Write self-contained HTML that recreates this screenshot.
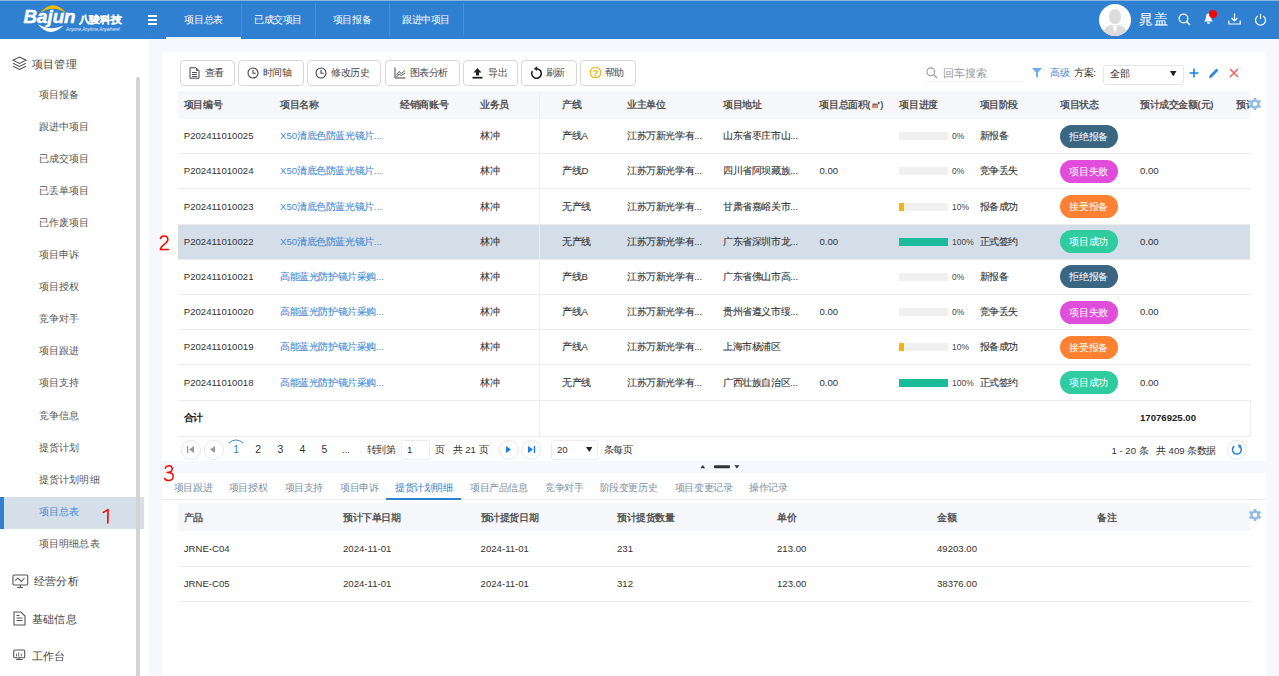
<!DOCTYPE html><html><head><meta charset="utf-8"><title>Bajun</title><style>
*{margin:0;padding:0;box-sizing:border-box}
html,body{width:1279px;height:676px;overflow:hidden;background:#f6f8fd;font-family:"Liberation Sans",sans-serif;color:#333}
.a{position:absolute}
i{display:inline-block;width:1em;font-style:normal;text-align:center}
.td i{-webkit-text-stroke:0.1px currentColor}
.hd{left:0;top:0;width:1279px;height:39px;background:#2f80d1}
.hd .tab{top:0;height:39px;width:74px;color:#fff;font-size:9.6px;line-height:39px;text-align:center}
.hd .sep{top:3px;width:1px;height:33px;background:rgba(255,255,255,.13)}
.sb{left:0;top:39px;width:149px;height:637px;background:#fff}
.mi{left:38.5px;font-size:10.2px;color:#555;line-height:14px;white-space:nowrap}
.mh{left:32px;font-size:11.2px;color:#444;line-height:16px;white-space:nowrap}
.card{background:#fff;border-radius:4px}
.btn{top:60px;height:25.5px;border:1px solid #d6d6d6;border-radius:4px;background:#fff;font-size:9.6px;color:#444;line-height:23.5px;white-space:nowrap}
.th{font-weight:bold;color:#555;font-size:9.6px;line-height:14px;white-space:nowrap}
.td{color:#333;font-size:9.6px;line-height:14px;white-space:nowrap}
.lk{color:#3f8bd6}
.badge{width:58px;height:23px;border-radius:12px;color:#fff;font-size:9.6px;line-height:23px;text-align:center}
.pb{width:48.5px;height:8px;background:#f0f0f0}
.pt{font-size:8.5px;color:#444;line-height:12px}
.hl{height:1px;background:#ececec}
.pg{font-size:9.6px;color:#333;line-height:14px;white-space:nowrap}
.circ{width:20px;height:20px;border-radius:50%;border:1px solid #e8e8e8;background:#fff}
.t2{font-size:9.6px;color:#7d8fa3;line-height:14px;white-space:nowrap}
</style></head><body>
<div class="a hd">
<div class="a" style="left:0;top:0;width:1279px;height:1px;background:#8db4dc"></div>
<svg class="a" style="left:22px;top:4px" width="104" height="30" viewBox="0 0 104 30"><path d="M18 9.2 Q31 -6.6 44.5 9.4 Q31 0.2 18 9.2Z" fill="#f5b800"/><text x="1.5" y="19" font-family="Liberation Sans" font-weight="bold" font-style="italic" font-size="18.5" fill="#fff" stroke="#fff" stroke-width="0.5" textLength="52" lengthAdjust="spacingAndGlyphs">Bajun</text><path d="M15.5 20 Q28 35 41.5 21.5 Q28 27.5 15.5 20Z" fill="#fff"/><text x="56.5" y="18.9" font-family="Liberation Sans" font-weight="bold" font-size="10.2" fill="#fff" stroke="#fff" stroke-width="0.25" textLength="43.5" lengthAdjust="spacingAndGlyphs">八骏科技</text><text x="44" y="27" font-family="Liberation Sans" font-style="italic" font-size="4.6" fill="#e8f0ff" textLength="54" lengthAdjust="spacingAndGlyphs">Anyone,Anytime,Anywhere!</text></svg>
<div class="a" style="left:148px;top:15px;width:9px;height:1.5px;background:#fff"></div>
<div class="a" style="left:148px;top:19px;width:9px;height:1.5px;background:#fff"></div>
<div class="a" style="left:148px;top:23px;width:9px;height:1.5px;background:#fff"></div>
<div class="a tab" style="left:166px;width:75px"><i>项</i><i>目</i><i>总</i><i>表</i></div>
<div class="a tab" style="left:241px;width:74px"><i>已</i><i>成</i><i>交</i><i>项</i><i>目</i></div>
<div class="a tab" style="left:315px;width:74px"><i>项</i><i>目</i><i>报</i><i>备</i></div>
<div class="a tab" style="left:389px;width:74px"><i>跟</i><i>进</i><i>中</i><i>项</i><i>目</i></div>
<div class="a sep" style="left:241px"></div>
<div class="a sep" style="left:315px"></div>
<div class="a sep" style="left:389px"></div>
<div class="a sep" style="left:463px"></div>
<div class="a" style="left:166px;top:37px;width:75px;height:2px;background:#eaf2fb"></div>
<div class="a" style="left:1099px;top:3.5px;width:32px;height:32px;border-radius:50%;background:#fff;overflow:hidden"><div class="a" style="left:10px;top:5.4px;width:12px;height:15.5px;border-radius:50% 50% 45% 45%;background:#dcdcdc"></div><div class="a" style="left:4px;top:21.3px;width:24px;height:14px;border-radius:9px 9px 0 0;background:#dcdcdc"></div><svg class="a" style="left:13px;top:21px" width="6" height="8" viewBox="0 0 6 8"><path d="M0.5 0.5 H5.5 L3 7.5Z" fill="#fff"/></svg></div>
<div class="a" style="left:1139px;top:11px;font-size:14.4px;line-height:17px;color:#fff;white-space:nowrap"><i>晁</i><i>盖</i></div>
<svg class="a" style="left:1178px;top:13px" width="14" height="13" viewBox="0 0 14 13"><circle cx="5.5" cy="5.5" r="4.3" fill="none" stroke="#fff" stroke-width="1.3"/><path d="M8.6 8.6 L12 12" stroke="#fff" stroke-width="1.4"/></svg>
<svg class="a" style="left:1203px;top:12px" width="14" height="13" viewBox="0 0 14 13"><path d="M1 9.5 Q3 8 3 5 Q3 1.5 5.5 1.5 Q8 1.5 8 5 Q8 8 10 9.5Z" fill="#fff"/><rect x="4" y="10.3" width="3" height="1.5" rx=".7" fill="#fff"/></svg>
<div class="a" style="left:1209px;top:10px;width:8px;height:8px;border-radius:50%;background:#f00"></div>
<svg class="a" style="left:1228px;top:13px" width="13" height="12" viewBox="0 0 13 12"><path d="M6.5 0.5 V8 M3.5 5 L6.5 8 L9.5 5" fill="none" stroke="#fff" stroke-width="1.2"/><path d="M0.8 7.5 V11 H12.2 V7.5" fill="none" stroke="#fff" stroke-width="1.2"/></svg>
<svg class="a" style="left:1254px;top:13px" width="13" height="13" viewBox="0 0 13 13"><path d="M3.8 3 A5 5 0 1 0 9.2 3" fill="none" stroke="#fff" stroke-width="1.2"/><path d="M6.5 0.8 V6" stroke="#fff" stroke-width="1.2"/></svg>
</div>
<div class="a sb"></div>
<svg class="a" style="left:12px;top:56px" width="15" height="15" viewBox="0 0 15 15"><path d="M7.5 1 L14 4.2 L7.5 7.4 L1 4.2Z" fill="none" stroke="#555" stroke-width="1.1"/><path d="M1 7.2 L7.5 10.4 L14 7.2" fill="none" stroke="#555" stroke-width="1.1"/><path d="M1 10.2 L7.5 13.4 L14 10.2" fill="none" stroke="#555" stroke-width="1.1"/></svg>
<div class="a mh" style="top:56px"><i>项</i><i>目</i><i>管</i><i>理</i></div>
<div class="a mi" style="top:87.5px"><i>项</i><i>目</i><i>报</i><i>备</i></div>
<div class="a mi" style="top:119.6px"><i>跟</i><i>进</i><i>中</i><i>项</i><i>目</i></div>
<div class="a mi" style="top:151.7px"><i>已</i><i>成</i><i>交</i><i>项</i><i>目</i></div>
<div class="a mi" style="top:183.8px"><i>已</i><i>丢</i><i>单</i><i>项</i><i>目</i></div>
<div class="a mi" style="top:215.9px"><i>已</i><i>作</i><i>废</i><i>项</i><i>目</i></div>
<div class="a mi" style="top:248.0px"><i>项</i><i>目</i><i>申</i><i>诉</i></div>
<div class="a mi" style="top:280.1px"><i>项</i><i>目</i><i>授</i><i>权</i></div>
<div class="a mi" style="top:312.2px"><i>竞</i><i>争</i><i>对</i><i>手</i></div>
<div class="a mi" style="top:344.3px"><i>项</i><i>目</i><i>跟</i><i>进</i></div>
<div class="a mi" style="top:376.4px"><i>项</i><i>目</i><i>支</i><i>持</i></div>
<div class="a mi" style="top:408.5px"><i>竞</i><i>争</i><i>信</i><i>息</i></div>
<div class="a mi" style="top:440.6px"><i>提</i><i>货</i><i>计</i><i>划</i></div>
<div class="a mi" style="top:472.7px"><i>提</i><i>货</i><i>计</i><i>划</i><i>明</i><i>细</i></div>
<div class="a" style="left:0;top:497px;width:144px;height:32px;background:#d5dfe9"></div>
<div class="a" style="left:0;top:497px;width:4px;height:32px;background:#2f80d1"></div>
<div class="a mi" style="top:504.8px;color:#3f8bd6"><i>项</i><i>目</i><i>总</i><i>表</i></div>
<div class="a mi" style="top:536.9px"><i>项</i><i>目</i><i>明</i><i>细</i><i>总</i><i>表</i></div>
<div class="a" style="left:136px;top:77px;width:3.5px;height:599px;background:#d4d4d4;border-radius:2px 2px 0 0"></div>
<svg class="a" style="left:12px;top:574px" width="17" height="15" viewBox="0 0 17 15"><rect x="1" y="1" width="14.7" height="10" rx="1.2" fill="none" stroke="#555" stroke-width="1.1"/><path d="M3.1 6.6 L5.8 4.2 L9.3 7.5 L12.5 4" fill="none" stroke="#555" stroke-width="1.1"/><path d="M8.3 11 V13.5 M5.2 13.5 H10.9" stroke="#555" stroke-width="1.1"/></svg>
<div class="a mh" style="top:573px;left:34px"><i>经</i><i>营</i><i>分</i><i>析</i></div>
<svg class="a" style="left:13px;top:611px" width="13" height="15" viewBox="0 0 13 15"><path d="M1 1 H8 L12 5 V14 H1Z" fill="none" stroke="#555" stroke-width="1.1"/><path d="M3.5 7 H9.5 M3.5 9.5 H9.5 M3.5 4.5 H6.5" stroke="#555" stroke-width="1"/></svg>
<div class="a mh" style="top:610.5px"><i>基</i><i>础</i><i>信</i><i>息</i></div>
<svg class="a" style="left:13px;top:649px" width="13" height="12" viewBox="0 0 13 12"><rect x="0.7" y="1" width="11" height="7.7" rx="1" fill="none" stroke="#555" stroke-width="1.1"/><path d="M3.5 7.5 V4.5 M5.7 7.5 V3.2 M8.3 7.5 V4.5" stroke="#666" stroke-width="0.9"/><path d="M6.2 8.7 V10.5 M3 10.5 H9.6" stroke="#555" stroke-width="1.1"/></svg>
<div class="a mh" style="top:647.5px"><i>工</i><i>作</i><i>台</i></div>
<svg class="a" style="left:100px;top:506px" width="12" height="20" viewBox="0 0 12 20"><path d="M3.4 6.4 L8 3.6 L7.8 17" fill="none" stroke="#f00" stroke-width="1.6" stroke-linecap="round" stroke-linejoin="round"/></svg>
<div class="a card" style="left:162px;top:52px;width:1104px;height:409px;border-radius:4px 4px 0 0"></div>
<div class="a btn" style="left:180.0px;width:55.0px"><svg class="a" style="left:7.8px;top:6px" width="11" height="12" viewBox="0 0 11 12"><path d="M1 .8 H7 L10 3.8 V11.2 H1Z" fill="none" stroke="#444" stroke-width="1"/><path d="M3 5.5 H8 M3 7.5 H8 M3 9.5 H8" stroke="#444" stroke-width=".9"/><path d="M7 .8 V3.8 H10" fill="#444"/></svg><span class="a" style="left:23.5px;top:0"><i>查</i><i>看</i></span></div>
<div class="a btn" style="left:238.0px;width:65.5px"><svg class="a" style="left:7.8px;top:6px" width="12" height="12" viewBox="0 0 12 12"><circle cx="6" cy="6" r="5" fill="none" stroke="#444" stroke-width="1.1"/><path d="M6 2.8 V6.2 H8.8" fill="none" stroke="#444" stroke-width="1.1"/></svg><span class="a" style="left:23.5px;top:0"><i>时</i><i>间</i><i>轴</i></span></div>
<div class="a btn" style="left:306.5px;width:74.5px"><svg class="a" style="left:7.8px;top:6px" width="12" height="12" viewBox="0 0 12 12"><circle cx="6" cy="6" r="5" fill="none" stroke="#444" stroke-width="1.1"/><path d="M6 2.8 V6.2 H8.8" fill="none" stroke="#444" stroke-width="1.1"/></svg><span class="a" style="left:23.5px;top:0"><i>修</i><i>改</i><i>历</i><i>史</i></span></div>
<div class="a btn" style="left:385.0px;width:74.5px"><svg class="a" style="left:7.8px;top:6px" width="12" height="12" viewBox="0 0 12 12"><path d="M1 .5 V11 H11.5" fill="none" stroke="#444" stroke-width="1"/><path d="M2.5 8 L5 4.5 L7.5 6.5 L11 3.5 M2.5 10 L5 7 L7.5 8.5 L11 6" fill="none" stroke="#444" stroke-width=".9"/></svg><span class="a" style="left:23.5px;top:0"><i>图</i><i>表</i><i>分</i><i>析</i></span></div>
<div class="a btn" style="left:462.5px;width:55.5px"><svg class="a" style="left:8.5px;top:6px" width="11" height="12" viewBox="0 0 11 12"><path d="M5.5 1 L9.5 5.5 H7 V8.5 H4 V5.5 H1.5Z" fill="#222"/><rect x="0.5" y="9.8" width="10" height="1.8" fill="#222"/></svg><span class="a" style="left:24.5px;top:0"><i>导</i><i>出</i></span></div>
<div class="a btn" style="left:521.3px;width:55.3px"><svg class="a" style="left:7.8px;top:4.8px" width="13" height="14" viewBox="0 0 13 14"><path d="M6.8 2.7 A4.8 4.8 0 1 1 2.34 5.1" fill="none" stroke="#222" stroke-width="1.6"/><path d="M3.8 2.7 L7.2 0.3 L7.2 5.1Z" fill="#222"/></svg><span class="a" style="left:23.5px;top:0"><i>刷</i><i>新</i></span></div>
<div class="a btn" style="left:580.4px;width:55.4px"><svg class="a" style="left:8px;top:4.9px" width="13" height="13" viewBox="0 0 13 13"><circle cx="6.5" cy="6.5" r="5.3" fill="none" stroke="#f5b400" stroke-width="1.1"/><text x="6.6" y="9.9" text-anchor="middle" font-family="Liberation Sans" font-weight="bold" font-size="9.5" fill="#f5b400">?</text></svg><span class="a" style="left:23.5px;top:0"><i>帮</i><i>助</i></span></div>
<svg class="a" style="left:926px;top:67px" width="12" height="12" viewBox="0 0 12 12"><circle cx="4.8" cy="4.8" r="3.9" fill="none" stroke="#999" stroke-width="1.1"/><path d="M7.6 7.6 L11 11" stroke="#999" stroke-width="1.3"/></svg>
<div class="a" style="left:943px;top:65.8px;font-size:10.9px;color:#999;line-height:14px"><i>回</i><i>车</i><i>搜</i><i>索</i></div>
<div class="a" style="left:926px;top:81px;width:99px;height:1px;background:#efefef"></div>
<svg class="a" style="left:1032px;top:68px" width="10" height="10" viewBox="0 0 10 10"><path d="M0 0 H10 L6 4.5 V10 L4 8.5 V4.5Z" fill="#6fabe6"/></svg>
<div class="a" style="left:1050px;top:66px;font-size:9.6px;color:#3f8bd6;line-height:14px"><i>高</i><i>级</i></div>
<div class="a" style="left:1074px;top:66px;font-size:9.6px;color:#333;line-height:14px"><i>方</i><i>案</i>:</div>
<div class="a" style="left:1103px;top:64.5px;width:80.5px;height:20px;border:1px solid #e6e6e6;border-radius:3px;background:#fff"></div>
<div class="a" style="left:1110px;top:67px;font-size:9.6px;color:#333;line-height:14px"><i>全</i><i>部</i></div>
<svg class="a" style="left:1170px;top:70.8px" width="6.5" height="5.5" viewBox="0 0 6.5 5.5"><path d="M0 0 H6.5 L3.25 5.5Z" fill="#222"/></svg>
<svg class="a" style="left:1189px;top:68px" width="10" height="10" viewBox="0 0 10 10"><path d="M5 .5 V9.5 M.5 5 H9.5" stroke="#1e7fe0" stroke-width="1.6"/></svg>
<svg class="a" style="left:1208px;top:67px" width="12" height="12" viewBox="0 0 12 12"><path d="M1 11 L1.6 8.4 L8.5 1.5 L10.5 3.5 L3.6 10.4Z" fill="#3386d9"/></svg>
<svg class="a" style="left:1229px;top:68px" width="10" height="10" viewBox="0 0 10 10"><path d="M1 1 L9 9 M9 1 L1 9" stroke="#f46262" stroke-width="1.6"/></svg>
<div class="a" style="left:178px;top:91px;width:1072px;height:27.5px;background:#f5f7fb"></div>
<div class="a th" style="left:183.8px;top:98px"><i>项</i><i>目</i><i>编</i><i>号</i></div>
<div class="a th" style="left:280.0px;top:98px"><i>项</i><i>目</i><i>名</i><i>称</i></div>
<div class="a th" style="left:400.3px;top:98px"><i>经</i><i>销</i><i>商</i><i>账</i><i>号</i></div>
<div class="a th" style="left:480.0px;top:98px"><i>业</i><i>务</i><i>员</i></div>
<div class="a th" style="left:562.3px;top:98px"><i>产</i><i>线</i></div>
<div class="a th" style="left:627.0px;top:98px"><i>业</i><i>主</i><i>单</i><i>位</i></div>
<div class="a th" style="left:723.0px;top:98px"><i>项</i><i>目</i><i>地</i><i>址</i></div>
<div class="a th" style="left:819.4px;top:98px"><i>项</i><i>目</i><i>总</i><i>面</i><i>积</i>(<i>㎡</i>)</div>
<div class="a th" style="left:899.4px;top:98px"><i>项</i><i>目</i><i>进</i><i>度</i></div>
<div class="a th" style="left:979.6px;top:98px"><i>项</i><i>目</i><i>阶</i><i>段</i></div>
<div class="a th" style="left:1060.0px;top:98px"><i>项</i><i>目</i><i>状</i><i>态</i></div>
<div class="a th" style="left:1140.0px;top:98px"><i>预</i><i>计</i><i>成</i><i>交</i><i>金</i><i>额</i>(<i>元</i>)</div>
<div class="a th" style="left:1236.0px;top:98px;width:14px;overflow:hidden"><i>预</i><i>计</i><i>成</i><i>交</i></div>
<svg class="a" style="left:1248.6px;top:98.1px" width="12" height="12" viewBox="0 0 12 12"><circle cx="6" cy="6" r="4.6" fill="#8fbbe6"/><rect x="4.7" y="-0.3" width="2.6" height="12.6" rx="0.4" fill="#8fbbe6" transform="rotate(0 6 6)"/><rect x="4.7" y="-0.3" width="2.6" height="12.6" rx="0.4" fill="#8fbbe6" transform="rotate(60 6 6)"/><rect x="4.7" y="-0.3" width="2.6" height="12.6" rx="0.4" fill="#8fbbe6" transform="rotate(120 6 6)"/><circle cx="6" cy="6" r="2.3" fill="#fff"/></svg>
<div class="a hl" style="left:178px;top:153.2px;width:1072px"></div>
<div class="a td" style="left:183.75px;top:129.1px">P202411010025</div>
<div class="a td lk" style="left:280px;top:129.1px">X50<i>清</i><i>底</i><i>色</i><i>防</i><i>蓝</i><i>光</i><i>镜</i><i>片</i>...</div>
<div class="a td" style="left:480px;top:129.1px"><i>林</i><i>冲</i></div>
<div class="a td" style="left:562.3px;top:129.1px"><i>产</i><i>线</i>A</div>
<div class="a td" style="left:627px;top:129.1px"><i>江</i><i>苏</i><i>万</i><i>新</i><i>光</i><i>学</i><i>有</i>...</div>
<div class="a td" style="left:723px;top:129.1px"><i>山</i><i>东</i><i>省</i><i>枣</i><i>庄</i><i>市</i><i>山</i>...</div>
<div class="a pb" style="left:899px;top:132.1px"></div>
<div class="a pt" style="left:952px;top:130.1px">0%</div>
<div class="a td" style="left:979.6px;top:129.1px"><i>新</i><i>报</i><i>备</i></div>
<div class="a badge" style="left:1059.6px;top:124.6px;background:#3a6682"><i>拒</i><i>绝</i><i>报</i><i>备</i></div>
<div class="a hl" style="left:178px;top:188.4px;width:1072px"></div>
<div class="a td" style="left:183.75px;top:164.3px">P202411010024</div>
<div class="a td lk" style="left:280px;top:164.3px">X50<i>清</i><i>底</i><i>色</i><i>防</i><i>蓝</i><i>光</i><i>镜</i><i>片</i>...</div>
<div class="a td" style="left:480px;top:164.3px"><i>林</i><i>冲</i></div>
<div class="a td" style="left:562.3px;top:164.3px"><i>产</i><i>线</i>D</div>
<div class="a td" style="left:627px;top:164.3px"><i>江</i><i>苏</i><i>万</i><i>新</i><i>光</i><i>学</i><i>有</i>...</div>
<div class="a td" style="left:723px;top:164.3px"><i>四</i><i>川</i><i>省</i><i>阿</i><i>坝</i><i>藏</i><i>族</i>...</div>
<div class="a td" style="left:819.4px;top:164.3px">0.00</div>
<div class="a pb" style="left:899px;top:167.3px"></div>
<div class="a pt" style="left:952px;top:165.3px">0%</div>
<div class="a td" style="left:979.6px;top:164.3px"><i>竞</i><i>争</i><i>丢</i><i>失</i></div>
<div class="a badge" style="left:1059.6px;top:159.8px;background:#e14ddb"><i>项</i><i>目</i><i>失</i><i>败</i></div>
<div class="a td" style="left:1140px;top:164.3px">0.00</div>
<div class="a hl" style="left:178px;top:223.6px;width:1072px"></div>
<div class="a td" style="left:183.75px;top:199.5px">P202411010023</div>
<div class="a td lk" style="left:280px;top:199.5px">X50<i>清</i><i>底</i><i>色</i><i>防</i><i>蓝</i><i>光</i><i>镜</i><i>片</i>...</div>
<div class="a td" style="left:480px;top:199.5px"><i>林</i><i>冲</i></div>
<div class="a td" style="left:562.3px;top:199.5px"><i>无</i><i>产</i><i>线</i></div>
<div class="a td" style="left:627px;top:199.5px"><i>江</i><i>苏</i><i>万</i><i>新</i><i>光</i><i>学</i><i>有</i>...</div>
<div class="a td" style="left:723px;top:199.5px"><i>甘</i><i>肃</i><i>省</i><i>嘉</i><i>峪</i><i>关</i><i>市</i>...</div>
<div class="a pb" style="left:899px;top:202.5px"></div>
<div class="a" style="left:899px;top:202.5px;width:5px;height:8px;background:#f2b40c"></div>
<div class="a pt" style="left:952px;top:200.5px">10%</div>
<div class="a td" style="left:979.6px;top:199.5px"><i>报</i><i>备</i><i>成</i><i>功</i></div>
<div class="a badge" style="left:1059.6px;top:195.0px;background:#fd8131"><i>接</i><i>受</i><i>报</i><i>备</i></div>
<div class="a" style="left:178px;top:224.6px;width:1072px;height:34.7px;background:#d4dee8"></div>
<div class="a hl" style="left:178px;top:258.8px;width:1072px"></div>
<div class="a td" style="left:183.75px;top:234.7px">P202411010022</div>
<div class="a td lk" style="left:280px;top:234.7px">X50<i>清</i><i>底</i><i>色</i><i>防</i><i>蓝</i><i>光</i><i>镜</i><i>片</i>...</div>
<div class="a td" style="left:480px;top:234.7px"><i>林</i><i>冲</i></div>
<div class="a td" style="left:562.3px;top:234.7px"><i>无</i><i>产</i><i>线</i></div>
<div class="a td" style="left:627px;top:234.7px"><i>江</i><i>苏</i><i>万</i><i>新</i><i>光</i><i>学</i><i>有</i>...</div>
<div class="a td" style="left:723px;top:234.7px"><i>广</i><i>东</i><i>省</i><i>深</i><i>圳</i><i>市</i><i>龙</i>...</div>
<div class="a td" style="left:819.4px;top:234.7px">0.00</div>
<div class="a pb" style="left:899px;top:237.7px"></div>
<div class="a" style="left:899px;top:237.7px;width:48.5px;height:8px;background:#1abc9c"></div>
<div class="a pt" style="left:952px;top:235.7px">100%</div>
<div class="a td" style="left:979.6px;top:234.7px"><i>正</i><i>式</i><i>签</i><i>约</i></div>
<div class="a badge" style="left:1059.6px;top:230.2px;background:#2ecc9f"><i>项</i><i>目</i><i>成</i><i>功</i></div>
<div class="a td" style="left:1140px;top:234.7px">0.00</div>
<div class="a hl" style="left:178px;top:294.0px;width:1072px"></div>
<div class="a td" style="left:183.75px;top:269.9px">P202411010021</div>
<div class="a td lk" style="left:280px;top:269.9px"><i>高</i><i>能</i><i>蓝</i><i>光</i><i>防</i><i>护</i><i>镜</i><i>片</i><i>采</i><i>购</i>...</div>
<div class="a td" style="left:480px;top:269.9px"><i>林</i><i>冲</i></div>
<div class="a td" style="left:562.3px;top:269.9px"><i>产</i><i>线</i>B</div>
<div class="a td" style="left:627px;top:269.9px"><i>江</i><i>苏</i><i>万</i><i>新</i><i>光</i><i>学</i><i>有</i>...</div>
<div class="a td" style="left:723px;top:269.9px"><i>广</i><i>东</i><i>省</i><i>佛</i><i>山</i><i>市</i><i>高</i>...</div>
<div class="a pb" style="left:899px;top:272.9px"></div>
<div class="a pt" style="left:952px;top:270.9px">0%</div>
<div class="a td" style="left:979.6px;top:269.9px"><i>新</i><i>报</i><i>备</i></div>
<div class="a badge" style="left:1059.6px;top:265.4px;background:#3a6682"><i>拒</i><i>绝</i><i>报</i><i>备</i></div>
<div class="a hl" style="left:178px;top:329.2px;width:1072px"></div>
<div class="a td" style="left:183.75px;top:305.1px">P202411010020</div>
<div class="a td lk" style="left:280px;top:305.1px"><i>高</i><i>能</i><i>蓝</i><i>光</i><i>防</i><i>护</i><i>镜</i><i>片</i><i>采</i><i>购</i>...</div>
<div class="a td" style="left:480px;top:305.1px"><i>林</i><i>冲</i></div>
<div class="a td" style="left:562.3px;top:305.1px"><i>产</i><i>线</i>A</div>
<div class="a td" style="left:627px;top:305.1px"><i>江</i><i>苏</i><i>万</i><i>新</i><i>光</i><i>学</i><i>有</i>...</div>
<div class="a td" style="left:723px;top:305.1px"><i>贵</i><i>州</i><i>省</i><i>遵</i><i>义</i><i>市</i><i>绥</i>...</div>
<div class="a td" style="left:819.4px;top:305.1px">0.00</div>
<div class="a pb" style="left:899px;top:308.1px"></div>
<div class="a pt" style="left:952px;top:306.1px">0%</div>
<div class="a td" style="left:979.6px;top:305.1px"><i>竞</i><i>争</i><i>丢</i><i>失</i></div>
<div class="a badge" style="left:1059.6px;top:300.6px;background:#e14ddb"><i>项</i><i>目</i><i>失</i><i>败</i></div>
<div class="a td" style="left:1140px;top:305.1px">0.00</div>
<div class="a hl" style="left:178px;top:364.4px;width:1072px"></div>
<div class="a td" style="left:183.75px;top:340.3px">P202411010019</div>
<div class="a td lk" style="left:280px;top:340.3px"><i>高</i><i>能</i><i>蓝</i><i>光</i><i>防</i><i>护</i><i>镜</i><i>片</i><i>采</i><i>购</i>...</div>
<div class="a td" style="left:480px;top:340.3px"><i>林</i><i>冲</i></div>
<div class="a td" style="left:562.3px;top:340.3px"><i>产</i><i>线</i>A</div>
<div class="a td" style="left:627px;top:340.3px"><i>江</i><i>苏</i><i>万</i><i>新</i><i>光</i><i>学</i><i>有</i>...</div>
<div class="a td" style="left:723px;top:340.3px"><i>上</i><i>海</i><i>市</i><i>杨</i><i>浦</i><i>区</i></div>
<div class="a pb" style="left:899px;top:343.3px"></div>
<div class="a" style="left:899px;top:343.3px;width:5px;height:8px;background:#f2b40c"></div>
<div class="a pt" style="left:952px;top:341.3px">10%</div>
<div class="a td" style="left:979.6px;top:340.3px"><i>报</i><i>备</i><i>成</i><i>功</i></div>
<div class="a badge" style="left:1059.6px;top:335.8px;background:#fd8131"><i>接</i><i>受</i><i>报</i><i>备</i></div>
<div class="a hl" style="left:178px;top:399.6px;width:1072px"></div>
<div class="a td" style="left:183.75px;top:375.5px">P202411010018</div>
<div class="a td lk" style="left:280px;top:375.5px"><i>高</i><i>能</i><i>蓝</i><i>光</i><i>防</i><i>护</i><i>镜</i><i>片</i><i>采</i><i>购</i>...</div>
<div class="a td" style="left:480px;top:375.5px"><i>林</i><i>冲</i></div>
<div class="a td" style="left:562.3px;top:375.5px"><i>无</i><i>产</i><i>线</i></div>
<div class="a td" style="left:627px;top:375.5px"><i>江</i><i>苏</i><i>万</i><i>新</i><i>光</i><i>学</i><i>有</i>...</div>
<div class="a td" style="left:723px;top:375.5px"><i>广</i><i>西</i><i>壮</i><i>族</i><i>自</i><i>治</i><i>区</i>...</div>
<div class="a td" style="left:819.4px;top:375.5px">0.00</div>
<div class="a pb" style="left:899px;top:378.5px"></div>
<div class="a" style="left:899px;top:378.5px;width:48.5px;height:8px;background:#1abc9c"></div>
<div class="a pt" style="left:952px;top:376.5px">100%</div>
<div class="a td" style="left:979.6px;top:375.5px"><i>正</i><i>式</i><i>签</i><i>约</i></div>
<div class="a badge" style="left:1059.6px;top:371.0px;background:#2ecc9f"><i>项</i><i>目</i><i>成</i><i>功</i></div>
<div class="a td" style="left:1140px;top:375.5px">0.00</div>
<div class="a" style="left:539px;top:91px;width:1px;height:345px;background:#eceef1"></div>
<div class="a" style="left:1249.5px;top:400px;width:1px;height:36px;background:#eceef1"></div>
<div class="a hl" style="left:178px;top:436px;width:1072px"></div>
<div class="a th" style="left:183.75px;top:410.5px;color:#222"><i>合</i><i>计</i></div>
<div class="a th" style="left:1140px;top:410.5px;color:#222">17076925.00</div>
<svg class="a" style="left:156px;top:232.8px" width="16" height="20" viewBox="0 0 16 20"><path d="M4.4 5.6 C5 3.7 6.4 2.9 8 2.9 C10.3 2.9 11.9 4.3 11.9 6.4 C11.9 8.6 10 9.9 8 11.6 C6 13.3 4.3 14.8 4.3 16.6 L12.4 16.6" fill="none" stroke="#f00" stroke-width="1.5" stroke-linecap="round" stroke-linejoin="round"/></svg>
<div class="a circ" style="left:181.3px;top:439.7px"></div>
<svg class="a" style="left:187px;top:446px" width="8" height="7" viewBox="0 0 8 7"><path d="M0 0 H1.3 V7 H0Z M7 0 V7 L2 3.5Z" fill="#999"/></svg>
<div class="a circ" style="left:203.5px;top:439.7px"></div>
<svg class="a" style="left:210px;top:446px" width="6" height="7" viewBox="0 0 6 7"><path d="M5 0 V7 L0 3.5Z" fill="#999"/></svg>
<svg class="a" style="left:227px;top:438px" width="18" height="6" viewBox="0 0 18 6"><path d="M1.5 5 Q9 -1 16.5 5" fill="none" stroke="#3f8bd6" stroke-width="1"/></svg>
<div class="a pg" style="left:233.2px;top:442.5px;font-size:10.4px;color:#2f80d1">1</div>
<div class="a pg" style="left:255.2px;top:442.5px;font-size:10.4px">2</div>
<div class="a pg" style="left:277.6px;top:442.5px;font-size:10.4px">3</div>
<div class="a pg" style="left:299.6px;top:442.5px;font-size:10.4px">4</div>
<div class="a pg" style="left:321.6px;top:442.5px;font-size:10.4px">5</div>
<div class="a pg" style="left:342px;top:443px">...</div>
<div class="a pg" style="left:366.5px;top:443px"><i>转</i><i>到</i><i>第</i></div>
<div class="a" style="left:400.6px;top:440px;width:29px;height:20px;border:1px solid #ececec;border-radius:3px;background:#fff"></div>
<div class="a pg" style="left:407px;top:443px">1</div>
<div class="a pg" style="left:434.5px;top:443px"><i>页</i></div>
<div class="a pg" style="left:453px;top:443px"><i>共</i> 21 <i>页</i></div>
<div class="a circ" style="left:498.7px;top:439.7px"></div>
<svg class="a" style="left:506px;top:446px" width="6" height="7" viewBox="0 0 6 7"><path d="M0 0 V7 L5 3.5Z" fill="#1e7fe0"/></svg>
<div class="a circ" style="left:521.2px;top:439.7px"></div>
<svg class="a" style="left:527.5px;top:446px" width="8" height="7" viewBox="0 0 8 7"><path d="M0 0 V7 L5 3.5Z M5.8 0 H7.2 V7 H5.8Z" fill="#1e7fe0"/></svg>
<div class="a" style="left:551px;top:440px;width:47px;height:20px;border:1px solid #ececec;border-radius:3px;background:#fff"></div>
<div class="a pg" style="left:557px;top:443px">20</div>
<svg class="a" style="left:585.5px;top:447.3px" width="6.5" height="5" viewBox="0 0 6.5 5"><path d="M0 0 H6.5 L3.25 5Z" fill="#222"/></svg>
<div class="a pg" style="left:603.7px;top:443px"><i>条</i><i>每</i><i>页</i></div>
<div class="a pg" style="left:1111.5px;top:443.5px">1 - 20 <i>条</i>&nbsp;&nbsp;&nbsp;<i>共</i> 409 <i>条</i><i>数</i><i>据</i></div>
<div class="a circ" style="left:1227px;top:439.75px"></div>
<svg class="a" style="left:1231px;top:443.5px" width="12" height="12" viewBox="0 0 12 12"><path d="M3.2 2.2 A4.4 4.4 0 1 0 8.6 2.2" fill="none" stroke="#1e7fe0" stroke-width="1.5"/><path d="M7.2 0.2 L10.6 1.6 L7.8 4.2Z" fill="#1e7fe0"/></svg>
<svg class="a" style="left:700px;top:462px" width="40" height="8" viewBox="0 0 40 8"><path d="M2.8 3 L5.2 6.2 H0.4Z" fill="#333"/><rect x="14" y="3.3" width="16" height="3" rx="1" fill="#333"/><path d="M34.4 3.2 H39.4 L36.9 6.4Z" fill="#333"/></svg>
<div class="a card" style="left:162px;top:473px;width:1104px;height:210px;border-radius:0"></div>
<div class="a t2" style="left:173.8px;top:480.5px;"><i>项</i><i>目</i><i>跟</i><i>进</i></div>
<div class="a t2" style="left:228.8px;top:480.5px;"><i>项</i><i>目</i><i>授</i><i>权</i></div>
<div class="a t2" style="left:284.5px;top:480.5px;"><i>项</i><i>目</i><i>支</i><i>持</i></div>
<div class="a t2" style="left:340.0px;top:480.5px;"><i>项</i><i>目</i><i>申</i><i>诉</i></div>
<div class="a t2" style="left:395.0px;top:480.5px;color:#2f80d1"><i>提</i><i>货</i><i>计</i><i>划</i><i>明</i><i>细</i></div>
<div class="a t2" style="left:470.0px;top:480.5px;"><i>项</i><i>目</i><i>产</i><i>品</i><i>信</i><i>息</i></div>
<div class="a t2" style="left:545.0px;top:480.5px;"><i>竞</i><i>争</i><i>对</i><i>手</i></div>
<div class="a t2" style="left:599.6px;top:480.5px;"><i>阶</i><i>段</i><i>变</i><i>更</i><i>历</i><i>史</i></div>
<div class="a t2" style="left:674.8px;top:480.5px;"><i>项</i><i>目</i><i>变</i><i>更</i><i>记</i><i>录</i></div>
<div class="a t2" style="left:749.0px;top:480.5px;"><i>操</i><i>作</i><i>记</i><i>录</i></div>
<div class="a hl" style="left:162px;top:499px;width:1104px;background:#e8eaee"></div>
<div class="a" style="left:386px;top:498px;width:75px;height:2px;background:#2f80d1"></div>
<div class="a" style="left:178px;top:503px;width:1072px;height:28px;background:#f5f7fb"></div>
<div class="a th" style="left:183.8px;top:511px"><i>产</i><i>品</i></div>
<div class="a th" style="left:343.0px;top:511px"><i>预</i><i>计</i><i>下</i><i>单</i><i>日</i><i>期</i></div>
<div class="a th" style="left:480.6px;top:511px"><i>预</i><i>计</i><i>提</i><i>货</i><i>日</i><i>期</i></div>
<div class="a th" style="left:617.0px;top:511px"><i>预</i><i>计</i><i>提</i><i>货</i><i>数</i><i>量</i></div>
<div class="a th" style="left:777.0px;top:511px"><i>单</i><i>价</i></div>
<div class="a th" style="left:937.0px;top:511px"><i>金</i><i>额</i></div>
<div class="a th" style="left:1097.0px;top:511px"><i>备</i><i>注</i></div>
<svg class="a" style="left:1248.7px;top:509.4px" width="12" height="12" viewBox="0 0 12 12"><circle cx="6" cy="6" r="4.6" fill="#8fbbe6"/><rect x="4.7" y="-0.3" width="2.6" height="12.6" rx="0.4" fill="#8fbbe6" transform="rotate(0 6 6)"/><rect x="4.7" y="-0.3" width="2.6" height="12.6" rx="0.4" fill="#8fbbe6" transform="rotate(60 6 6)"/><rect x="4.7" y="-0.3" width="2.6" height="12.6" rx="0.4" fill="#8fbbe6" transform="rotate(120 6 6)"/><circle cx="6" cy="6" r="2.3" fill="#fff"/></svg>
<div class="a td" style="left:183.8px;top:541.6px">JRNE-C04</div>
<div class="a td" style="left:343.0px;top:541.6px">2024-11-01</div>
<div class="a td" style="left:480.6px;top:541.6px">2024-11-01</div>
<div class="a td" style="left:617.0px;top:541.6px">231</div>
<div class="a td" style="left:777.0px;top:541.6px">213.00</div>
<div class="a td" style="left:937.0px;top:541.6px">49203.00</div>
<div class="a hl" style="left:178px;top:566.0px;width:1072px"></div>
<div class="a td" style="left:183.8px;top:576.8px">JRNE-C05</div>
<div class="a td" style="left:343.0px;top:576.8px">2024-11-01</div>
<div class="a td" style="left:480.6px;top:576.8px">2024-11-01</div>
<div class="a td" style="left:617.0px;top:576.8px">312</div>
<div class="a td" style="left:777.0px;top:576.8px">123.00</div>
<div class="a td" style="left:937.0px;top:576.8px">38376.00</div>
<div class="a hl" style="left:178px;top:601.2px;width:1072px"></div>
<svg class="a" style="left:160px;top:461.6px" width="16" height="22" viewBox="0 0 16 22"><path d="M5.2 6.1 C5.9 4.6 7 3.8 8.6 3.8 C10.7 3.8 12.2 5 12.2 6.8 C12.2 8.9 10.5 10.4 7.2 10.6 C10.9 10.6 13.2 12 13.2 14.3 C13.2 16.8 11.1 18.5 8.5 18.5 C6.5 18.5 5.1 17.6 4.6 16.4" fill="none" stroke="#f00" stroke-width="1.5" stroke-linecap="round" stroke-linejoin="round"/></svg>
</body></html>
